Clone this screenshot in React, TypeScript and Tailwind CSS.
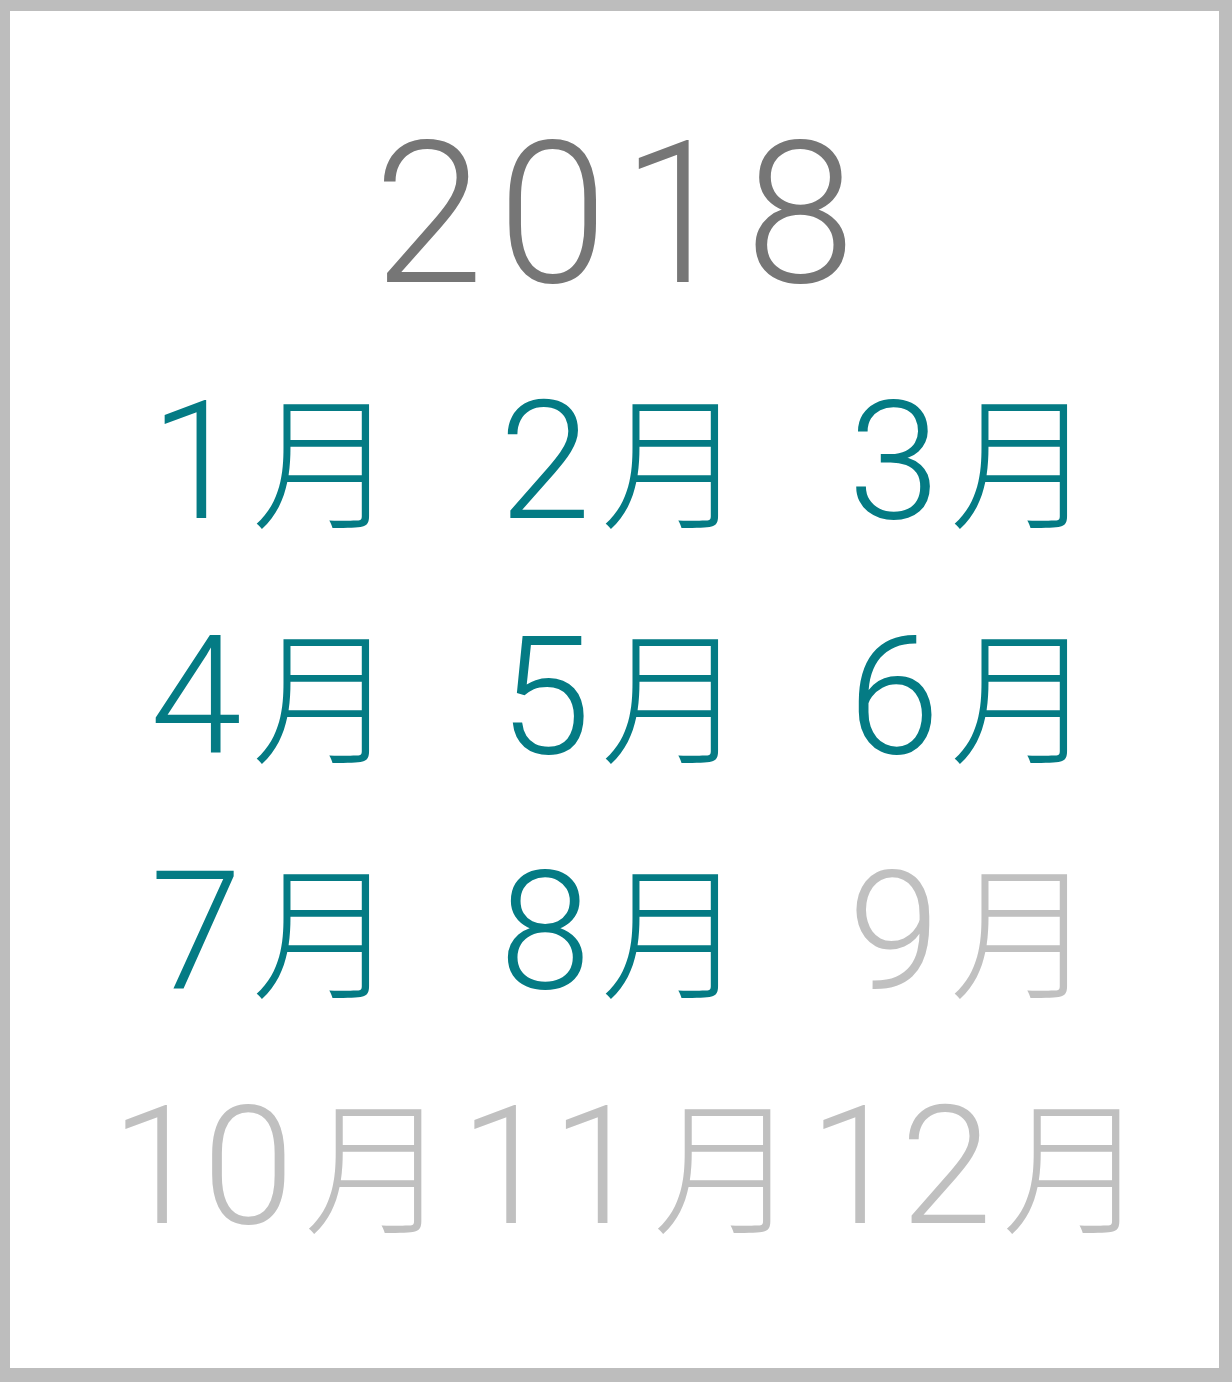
import React from "react";

const months = [
  { n: "1", active: true },
  { n: "2", active: true },
  { n: "3", active: true },
  { n: "4", active: true },
  { n: "5", active: true },
  { n: "6", active: true },
  { n: "7", active: true },
  { n: "8", active: true },
  { n: "9", active: false },
  { n: "10", active: false },
  { n: "11", active: false },
  { n: "12", active: false },
];

export default function App() {
  return (
    <div className="w-[1232px] h-[1382px] bg-[#bdbdbd] pt-[11px] pl-[10px] pr-[13px] pb-[14px]">
      <div
        className="w-full h-full bg-white flex flex-col items-center font-light"
        style={{ fontFamily: 'Roboto, "Noto Sans CJK JP", sans-serif' }}
      >
        <div className="mt-[104px] pl-[14px] text-[198px] leading-none text-[#767676] tracking-[14px]">
          2018
        </div>
        <div className="mt-[31px] ml-[16px] grid grid-cols-[349px_349px_349px]">
          {months.map((m) => (
            <div
              key={m.n}
              className={
                "text-center text-[165px] leading-[235px] whitespace-nowrap " +
                (m.n.length === 2 ? "pl-[12px] " : "") +
                (m.active ? "text-[#047b84]" : "text-[#c0c0c0]")
              }
            >
              {m.n}
              <span
                className="ml-[10px] text-[145px] leading-none font-light"
                style={{ fontFamily: '"Noto Sans CJK JP", sans-serif' }}
              >
                月
              </span>
            </div>
          ))}
        </div>
      </div>
    </div>
  );
}
